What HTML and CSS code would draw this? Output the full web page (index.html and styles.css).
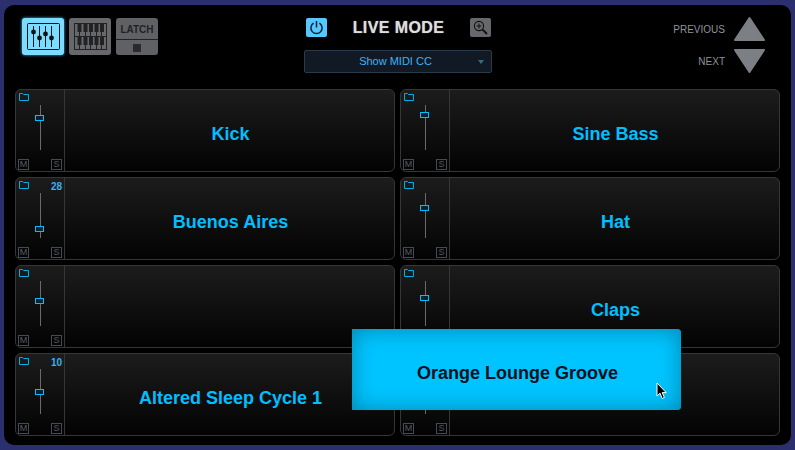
FILE: index.html
```html
<!DOCTYPE html>
<html lang="en">
<head>
    <meta charset="UTF-8">
    <title>Live Mode</title>
    <link rel="stylesheet" href="styles.css">
</head>
<body>
    <div class="window">
        <div class="toolbar">
            <div class="tool-group">
                <div class="tool-button active">
                    <svg width="34" height="28" viewBox="0 0 34 28">
                        <rect x="0.5" y="0.5" width="32" height="26" rx="1" fill="none" stroke="#111"/>
                        <path d="M6.5 3V24M12.5 3V24M18.5 3V24M24.5 3V24" stroke="#111"/>
                        <circle cx="6.5" cy="9" r="2.4" fill="#111"/>
                        <circle cx="12.5" cy="15" r="2.4" fill="#111"/>
                        <circle cx="18.5" cy="11" r="2.4" fill="#111"/>
                        <circle cx="24.5" cy="15" r="2.4" fill="#111"/>
                    </svg>
                </div>
                <div class="tool-button">
                    <svg width="34" height="28" viewBox="0 0 34 28">
                        <rect x="0.5" y="0.5" width="32" height="26" fill="none" stroke="#222"/>
                        <path d="M0 13.5H33M5.5 0V27M11.5 0V27M16.5 0V27M22.5 0V27M27.5 0V27" stroke="#222"/>
                        <path d="M3.5 1h4v8h-4zM9.5 1h4v8h-4zM15 1h4v8h-4zM20.5 1h4v8h-4zM26 1h4v8h-4zM3.5 14h4v8h-4zM9.5 14h4v8h-4zM15 14h4v8h-4zM20.5 14h4v8h-4zM26 14h4v8h-4z" fill="#222"/>
                    </svg>
                </div>
                <div class="latch-button">
                    <div class="latch-label">LATCH</div>
                    <div class="latch-stop"><span class="stop-square"></span></div>
                </div>
            </div>

            <div class="mode-group">
                <div class="mode-title-row">
                    <div class="small-button power">
                        <svg width="15" height="15" viewBox="0 0 15 15">
                            <path d="M4.6 3.2A5.6 5.6 0 1 0 10.4 3.2" fill="none" stroke="#123" stroke-width="1.5"/>
                            <path d="M7.5 1V7.5" stroke="#123" stroke-width="1.5"/>
                        </svg>
                    </div>
                    <div class="mode-title">LIVE MODE</div>
                    <div class="small-button zoom">
                        <svg width="15" height="15" viewBox="0 0 15 15">
                            <circle cx="6" cy="6" r="4.6" fill="none" stroke="#111" stroke-width="1.1"/>
                            <path d="M3.6 6H8.4M6 3.6V8.4" stroke="#111"/>
                            <path d="M9.5 9.5L14 14" stroke="#111" stroke-width="1.8"/>
                        </svg>
                    </div>
                </div>
                <div class="dropdown">
                    <span>Show MIDI CC</span>
                    <span class="dropdown-arrow"></span>
                </div>
            </div>

            <div class="nav-group">
                <div class="nav-row">
                    <span class="nav-label">PREVIOUS</span>
                    <svg width="33" height="26" viewBox="0 0 33 26"><path d="M16.5 2L31 24H2Z" fill="#7c7f84" stroke="#7c7f84" stroke-width="2" stroke-linejoin="round"/></svg>
                </div>
                <div class="nav-row">
                    <span class="nav-label">NEXT</span>
                    <svg width="33" height="26" viewBox="0 0 33 26"><path d="M16.5 24L31 2H2Z" fill="#7c7f84" stroke="#7c7f84" stroke-width="2" stroke-linejoin="round"/></svg>
                </div>
            </div>
        </div>

        <div class="tracks" id="tracks"></div>

        <div class="drag-popup">Orange Lounge Groove</div>
        <svg class="mouse-cursor" width="12" height="18" viewBox="0 0 12 18">
            <path d="M1 1V14L4 11.2L6.2 16.5L8.4 15.5L6.2 10.6H10.2Z" fill="#000" stroke="#fff" stroke-width="1"/>
        </svg>
    </div>

    <script>
        const tracks = [
            { name: "Kick", thumb: 10 },
            { name: "Sine Bass", thumb: 7 },
            { name: "Buenos Aires", thumb: 33, value: 28 },
            { name: "Hat", thumb: 12 },
            { name: "", thumb: 17 },
            { name: "Claps", thumb: 14 },
            { name: "Altered Sleep Cycle 1", thumb: 20, value: 10 },
            { name: "", thumb: 20 }
        ];

        const list = document.getElementById("tracks");
        tracks.forEach(track => {
            const card = document.createElement("div");
            card.className = "track";
            card.innerHTML = `
                <div class="track-side">
                    <div class="side-top">
                        <svg width="10" height="8" viewBox="0 0 10 8"><path d="M0.5 7.5V0.5H3.5L4.5 1.5H9.5V7.5Z" fill="none" stroke="#00aee6"/></svg>
                        <span class="track-value">${track.value || ""}</span>
                    </div>
                    <div class="slider"><span class="slider-thumb" style="top: ${track.thumb}px"></span></div>
                    <div class="side-bottom"><span class="flag">M</span><span class="flag">S</span></div>
                </div>
                <div class="track-name">${track.name}</div>`;
            list.appendChild(card);
        });
    </script>
</body>
</html>
```

FILE: styles.css
```css
html, body {
    margin: 0;
    height: 100%;
}
body {
    background-color: #2b2f6e;
    font-family: "Liberation Sans", Arial, sans-serif;
    overflow: hidden;
}
.window {
    position: relative;
    box-sizing: border-box;
    width: 787px;
    height: 440px;
    margin: 5px 0 0 4px;
    padding: 13px 11px 0;
    background-color: #000;
    border-radius: 10px;
}
.toolbar {
    display: grid;
    grid-template-columns: 1fr 188px 1fr;
    height: 71px;
    box-sizing: border-box;
}
.tool-group {
    display: flex;
    gap: 5px;
    padding-left: 7px;
    align-items: flex-start;
}
.tool-button {
    display: flex;
    align-items: center;
    justify-content: center;
    width: 42px;
    height: 37px;
    padding-left: 1px;
    box-sizing: border-box;
    background-color: #66686c;
    border-radius: 3px;
}
.tool-button.active {
    background-color: #7cdcff;
    box-shadow: 0 0 3px #4cc6ff;
}
.latch-button {
    width: 42px;
    height: 37px;
    background-color: #5f6165;
    border-radius: 3px;
    overflow: hidden;
}
.latch-label {
    height: 22px;
    line-height: 23px;
    box-sizing: border-box;
    border-bottom: 1px solid #222;
    color: #222;
    font-size: 10px;
    font-weight: bold;
    text-align: center;
}
.latch-stop {
    display: flex;
    align-items: center;
    justify-content: center;
    height: 15px;
}
.stop-square {
    width: 8px;
    height: 8px;
    background-color: #2a2a2c;
}
.mode-group {
    display: flex;
    flex-direction: column;
    gap: 13px;
}
.mode-title-row {
    display: flex;
    align-items: center;
    justify-content: space-between;
    padding-left: 2px;
}
.small-button {
    display: flex;
    align-items: center;
    justify-content: center;
    width: 21px;
    height: 19px;
    border-radius: 2px;
}
.power {
    background-color: #55c8ff;
}
.zoom {
    background-color: #66686c;
}
.mode-title {
    color: #dddddd;
    font-size: 16px;
    font-weight: bold;
    letter-spacing: 0.4px;
    text-shadow: 0 0 1px #999;
}
.dropdown {
    position: relative;
    height: 23px;
    line-height: 21px;
    padding-right: 4px;
    box-sizing: border-box;
    background-color: #111a24;
    border: 1px solid #2a3a48;
    border-radius: 2px;
    color: #3cb4f8;
    font-size: 11px;
    text-align: center;
}
.dropdown-arrow {
    position: absolute;
    top: 9px;
    right: 7px;
    border-left: 3px solid transparent;
    border-right: 3px solid transparent;
    border-top: 4px solid #3a6888;
}
.nav-group {
    display: flex;
    flex-direction: column;
    gap: 6px;
    padding-right: 14px;
    margin-top: -2px;
}
.nav-row {
    display: flex;
    align-items: center;
    justify-content: flex-end;
    gap: 8px;
}
.nav-label {
    color: #8f9399;
    font-size: 10px;
}
.tracks {
    display: grid;
    grid-template-columns: 380px 380px;
    grid-auto-rows: 83px;
    gap: 5px;
}
.track {
    display: flex;
    box-sizing: border-box;
    background: linear-gradient(#1c1c1c, #030303);
    border: 1px solid #363636;
    border-radius: 6px;
}
.track-side {
    width: 49px;
    flex-shrink: 0;
    box-sizing: border-box;
    padding: 3px 2px 0;
    border-right: 1px solid #363636;
}
.side-top {
    display: flex;
    justify-content: space-between;
    height: 10px;
    padding-left: 1px;
}
.track-value {
    color: #3cb0f2;
    font-size: 10px;
    font-weight: bold;
    line-height: 10px;
    margin-top: 1px;
}
.slider {
    position: relative;
    width: 1px;
    height: 45px;
    margin: 2px 0 9px 22px;
    background-color: #6a6a6a;
}
.slider-thumb {
    position: absolute;
    left: -5px;
    width: 7px;
    height: 4px;
    background-color: #07222e;
    border: 1px solid #00c0ff;
}
.side-bottom {
    display: flex;
    justify-content: space-between;
}
.flag {
    width: 9px;
    height: 9px;
    line-height: 9px;
    border: 1px solid #454b52;
    color: #565c62;
    font-size: 9px;
    text-align: center;
}
.track-name {
    flex: 1;
    padding: 34px 0 0 2px;
    color: #00bfff;
    font-size: 18px;
    font-weight: bold;
    line-height: 20px;
    text-align: center;
}
.drag-popup {
    position: absolute;
    left: 348px;
    top: 324px;
    box-sizing: border-box;
    width: 329px;
    height: 81px;
    padding-left: 2px;
    line-height: 88px;
    background-color: #00c4ff;
    box-shadow: inset 0 0 22px #0085ad;
    border-radius: 0 4px 4px 0;
    color: #06101c;
    font-size: 18px;
    font-weight: bold;
    text-align: center;
}
.mouse-cursor {
    position: absolute;
    left: 652px;
    top: 377px;
}
```
